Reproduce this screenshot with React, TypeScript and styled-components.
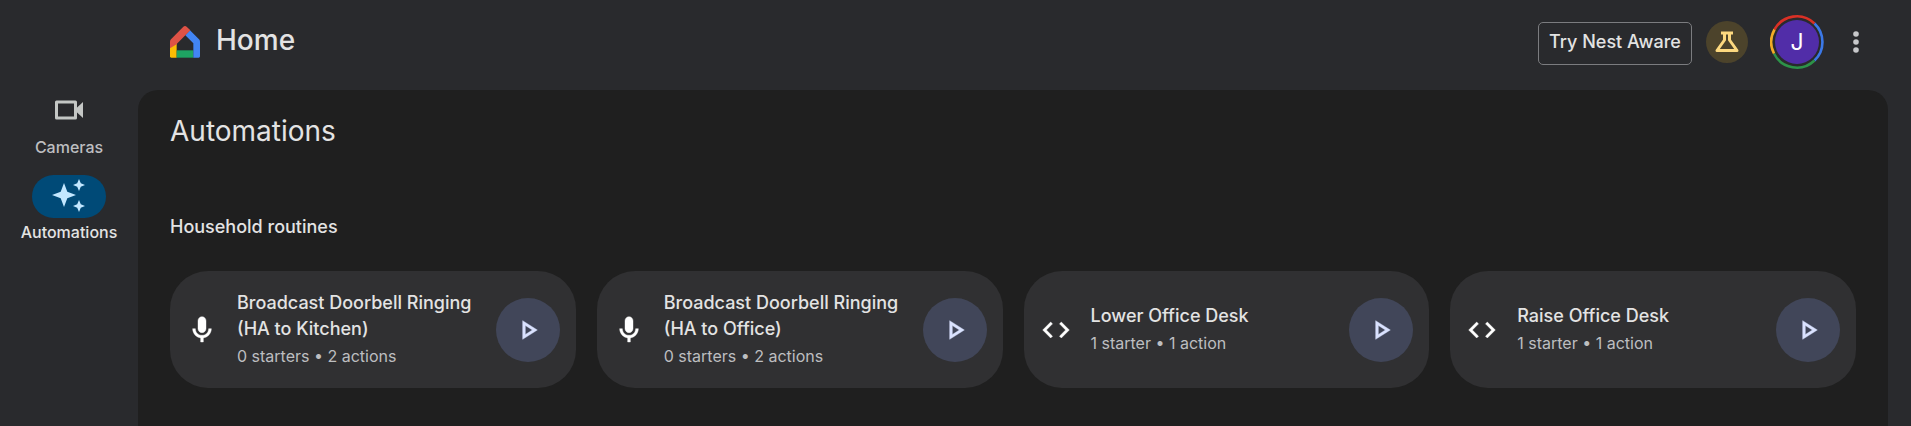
import React from 'react';
import styled, { createGlobalStyle } from 'styled-components';

const GlobalStyle = createGlobalStyle`
  *, *::before, *::after { box-sizing: border-box; }
  body {
    margin: 0;
    background: #292a2d;
    color: #e3e3e3;
    font-family: Inter, Roboto, sans-serif;
  }
  h1, h2, h3, p, ul { margin: 0; padding: 0; font-weight: 400; }
  button { font: inherit; color: inherit; padding: 0; border: 0; background: none; cursor: pointer; }
  svg { display: block; }
`;

const Page = styled.div`
  display: flex;
  flex-direction: column;
  min-height: 100vh;
`;

const Header = styled.header`
  display: flex;
  justify-content: space-between;
  height: 90px;
  padding: 0 43px 0 170px;
`;

const Brand = styled.a`
  display: flex;
  align-items: flex-start;
  gap: 16px;
  padding-top: 24px;
  color: inherit;
  text-decoration: none;
`;

const LogoBox = styled.span`
  padding-top: 2px;
`;

const BrandName = styled.span`
  font-size: 28px;
  font-weight: 500;
  line-height: 32px;
`;

const Actions = styled.div`
  display: flex;
  align-items: center;
  height: 84px;
`;

const NestAwareButton = styled.button`
  height: 43px;
  width: 154px;
  margin: 2px 14px 0 0;
  padding-bottom: 2px;
  border: 1px solid #7b7c7f;
  border-radius: 5px;
  font-size: 18px;
  font-weight: 500;
  line-height: 24px;
  white-space: nowrap;
`;

const LabsButton = styled.button`
  display: grid;
  place-items: center;
  width: 42px;
  height: 42px;
  margin-right: 22px;
  border-radius: 50%;
  background: #4c432b;
`;

const AvatarButton = styled.button`
  display: grid;
  place-items: center;
  width: 54px;
  height: 54px;
  margin-right: 20px;

  > * { grid-area: 1 / 1; }
`;

const Initial = styled.span`
  display: grid;
  place-items: center;
  width: 44px;
  height: 44px;
  border-radius: 50%;
  background: #512da8;
  color: #fff;
  font-size: 23px;
  line-height: 24px;
`;

const MenuButton = styled.button`
  display: grid;
  place-items: center;
  width: 24px;
  height: 40px;
`;

const Body = styled.div`
  display: flex;
  flex: 1;
  padding-right: 23px;
`;

const Sidebar = styled.nav`
  display: flex;
  flex-direction: column;
  gap: 14px;
  width: 138px;
  flex: none;
`;

const NavLink = styled.a<{ $active?: boolean }>`
  display: flex;
  flex-direction: column;
  align-items: center;
  color: ${(p) => (p.$active ? '#e3e3e3' : '#bdbec0')};
  font-size: 16px;
  font-weight: 500;
  line-height: 28px;
  text-decoration: none;
`;

const NavIcon = styled.span<{ $active?: boolean }>`
  display: grid;
  place-items: center;
  width: 74px;
  height: 43px;
  border-radius: 22px;
  background: ${(p) => (p.$active ? '#004a77' : 'transparent')};
  color: ${(p) => (p.$active ? '#c2e7ff' : '#c4c7c5')};
`;

const Panel = styled.main`
  flex: 1;
  min-width: 0;
  padding: 23px 32px 38px;
  border-radius: 20px 20px 0 0;
  background: #1f1f1f;
`;

const PageTitle = styled.h1`
  font-size: 28px;
  line-height: 36px;
`;

const SectionTitle = styled.h2`
  margin: 66px 0 32px;
  font-size: 18px;
  font-weight: 500;
  line-height: 24px;
`;

const CardGrid = styled.ul`
  display: grid;
  grid-template-columns: repeat(auto-fit, minmax(380px, 1fr));
  gap: 21px;
  list-style: none;
`;

const Card = styled.li`
  display: flex;
  align-items: center;
  min-height: 117px;
  padding: 16px;
  border-radius: 38px;
  background: #303032;
`;

const CardText = styled.div`
  flex: 1;
  min-width: 0;
  margin: 0 15px 0 19px;
`;

const CardTitle = styled.h3`
  font-size: 18px;
  font-weight: 500;
  line-height: 26px;
`;

const CardMeta = styled.p`
  color: #bdbec0;
  font-size: 16px;
  line-height: 28px;
`;

const PlayButton = styled.button`
  display: grid;
  place-items: center;
  flex: none;
  width: 64px;
  height: 64px;
  border-radius: 50%;
  background: #414659;
  color: #dae2ff;
`;

const HomeLogo = () => (
  <svg width="30" height="32" viewBox="0 0 90 96" aria-hidden="true">
    <path fill="#fbbc04" d="M0 60 20 46V95H4Q0 95 0 91Z" />
    <path fill="#1ea362" d="M20 73H70V95H20Z" />
    <path fill="#4285f4" d="M60 13 87 40Q90 43 90 47V91Q90 95 86 95H70V52L46 28Z" />
    <path fill="#de5246" d="M40 2Q45-2 50 2L61 13 20 54V55L0 67V47Q0 43 3 40Z" />
  </svg>
);

const FlaskIcon = () => (
  <svg width="26" height="24" viewBox="0 0 26 24" fill="none" stroke="#fdd97f" strokeWidth="3" aria-hidden="true">
    <path d="M7 3H19" />
    <path d="M10.5 3V10L3 20.5H23L15.5 10V3" strokeLinejoin="round" />
  </svg>
);

const AvatarRing = () => (
  <svg width="54" height="54" viewBox="0 0 54 54" fill="none" strokeWidth="2.6" aria-hidden="true">
    <path stroke="#d93025" d="M4.5 14.5A25.5 25.5 0 0 1 44.5 8.5" />
    <path stroke="#3b78e7" d="M44.5 8.5A25.5 25.5 0 0 1 44.5 45.5" />
    <path stroke="#2d9249" d="M44.5 45.5A25.5 25.5 0 0 1 4 38.5" />
    <path stroke="#f2ab26" d="M4 38.5A25.5 25.5 0 0 1 4.5 14.5" />
  </svg>
);

const DotsIcon = () => (
  <svg width="6" height="24" viewBox="0 0 6 24" fill="#c7c8ca" aria-hidden="true">
    <circle cx="3" cy="4" r="2.8" />
    <circle cx="3" cy="12" r="2.8" />
    <circle cx="3" cy="20" r="2.8" />
  </svg>
);

const CameraIcon = () => (
  <svg width="28" height="23" viewBox="0 0 28 23" aria-hidden="true">
    <rect x="1.5" y="2" width="19" height="16" fill="none" stroke="currentColor" strokeWidth="3" strokeLinejoin="round" />
    <path fill="currentColor" d="M21 8.5 28 2V18L21 11.5Z" />
  </svg>
);

const SparkleIcon = () => (
  <svg width="34" height="39" viewBox="0 0 34 39" fill="currentColor" aria-hidden="true">
    <path d="M12 6 15.3 14.7 24 18 15.3 21.3 12 30 8.7 21.3 0 18 8.7 14.7Z" />
    <path d="M27 2 28.8 6.2 33 8 28.8 9.8 27 14 25.2 9.8 21 8 25.2 6.2Z" />
    <path d="M27 23 28.8 27.2 33 29 28.8 30.8 27 35 25.2 30.8 21 29 25.2 27.2Z" />
  </svg>
);

const iconPaths = {
  mic: 'M12 14c1.66 0 3-1.34 3-3V5c0-1.66-1.34-3-3-3S9 3.34 9 5v6c0 1.66 1.34 3 3 3zm5-3c0 2.76-2.24 5-5 5s-5-2.24-5-5H5c0 3.53 2.61 6.43 6 6.92V21h2v-3.08c3.39-.49 6-3.39 6-6.92h-2z',
  code: 'M9.4 16.6 4.8 12l4.6-4.6L8 6l-6 6 6 6 1.4-1.4zm5.2 0 4.6-4.6-4.6-4.6L16 6l6 6-6 6-1.4-1.4z',
  play: 'M10 8.64 15.27 12 10 15.36V8.64M8 5v14l11-7L8 5z',
};

const Icon = ({ name, color }: { name: keyof typeof iconPaths; color: string }) => (
  <svg width="32" height="32" viewBox="0 0 24 24" fill={color} stroke={color} strokeWidth="0.3" aria-hidden="true">
    <path d={iconPaths[name]} />
  </svg>
);

const routines: { icon: 'mic' | 'code'; title: string; meta: string }[] = [
  { icon: 'mic', title: 'Broadcast Doorbell Ringing (HA to Kitchen)', meta: '0 starters • 2 actions' },
  { icon: 'mic', title: 'Broadcast Doorbell Ringing (HA to Office)', meta: '0 starters • 2 actions' },
  { icon: 'code', title: 'Lower Office Desk', meta: '1 starter • 1 action' },
  { icon: 'code', title: 'Raise Office Desk', meta: '1 starter • 1 action' },
];

export default function App() {
  return (
    <Page>
      <GlobalStyle />
      <Header>
        <Brand href="#home">
          <LogoBox><HomeLogo /></LogoBox>
          <BrandName>Home</BrandName>
        </Brand>
        <Actions>
          <NestAwareButton type="button">Try Nest Aware</NestAwareButton>
          <LabsButton type="button" aria-label="Labs"><FlaskIcon /></LabsButton>
          <AvatarButton type="button" aria-label="Account">
            <AvatarRing />
            <Initial>J</Initial>
          </AvatarButton>
          <MenuButton type="button" aria-label="More options"><DotsIcon /></MenuButton>
        </Actions>
      </Header>
      <Body>
        <Sidebar>
          <NavLink href="#cameras">
            <NavIcon><CameraIcon /></NavIcon>
            Cameras
          </NavLink>
          <NavLink href="#automations" $active aria-current="page">
            <NavIcon $active><SparkleIcon /></NavIcon>
            Automations
          </NavLink>
        </Sidebar>
        <Panel>
          <PageTitle>Automations</PageTitle>
          <SectionTitle>Household routines</SectionTitle>
          <CardGrid>
            {routines.map((r) => (
              <Card key={r.title}>
                <Icon name={r.icon} color="#fff" />
                <CardText>
                  <CardTitle>{r.title}</CardTitle>
                  <CardMeta>{r.meta}</CardMeta>
                </CardText>
                <PlayButton type="button" aria-label={`Run ${r.title}`}>
                  <Icon name="play" color="currentColor" />
                </PlayButton>
              </Card>
            ))}
          </CardGrid>
        </Panel>
      </Body>
    </Page>
  );
}
